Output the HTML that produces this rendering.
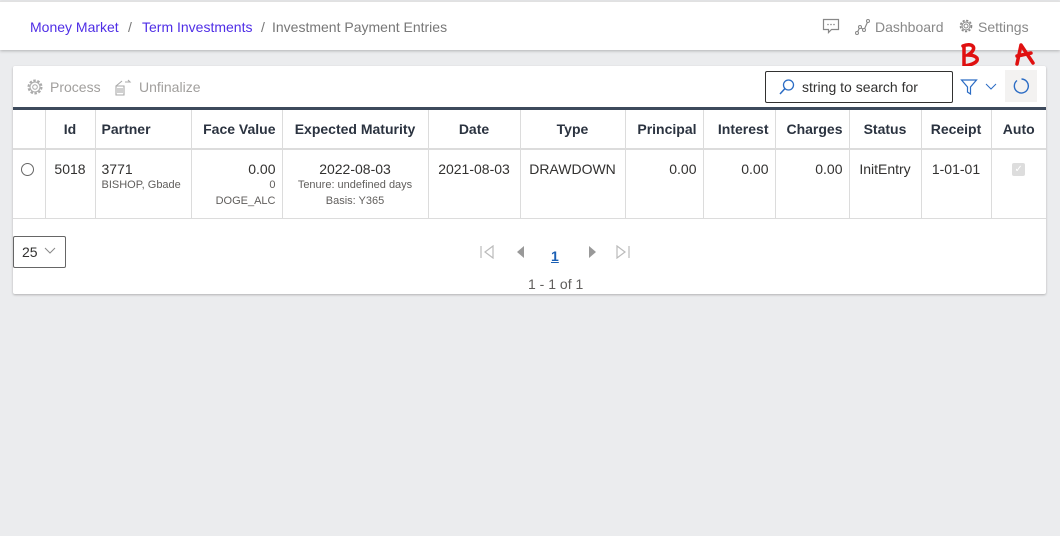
<!DOCTYPE html>
<html><head><style>
*{box-sizing:border-box;margin:0;padding:0}
body{width:1060px;height:536px;background:#ebecee;font-family:"Liberation Sans",sans-serif;font-size:14px;color:#323130;position:relative;overflow:hidden}
.top{position:absolute;left:0;top:1px;width:1060px;height:49px;background:#fff;border-top:1px solid #e1e1e1;box-shadow:0 1px 3px rgba(0,0,0,.25)}
.a{position:absolute;white-space:nowrap}
.card{position:absolute;left:13px;top:66px;width:1033px;height:228px;background:#fff;box-shadow:0 1px 2px rgba(0,0,0,.25);border-radius:2px}
table{position:absolute;left:0;top:41px;width:1033px;border-collapse:collapse;border-top:3px solid #3d4a5c}
td,th{border:1px solid #dcdcdc;padding:0 6px;vertical-align:top}
th{height:40px;font-weight:bold;color:#2b3340;vertical-align:middle;font-size:14px;border-bottom:2px solid #dcdcdc}
td{height:70px;padding-top:11px}
tr td:first-child,tr th:first-child{border-left:none}
tr td:last-child,tr th:last-child{border-right:none}
.r{text-align:right}.c{text-align:center}
.s{font-size:11px;color:#605e5c;line-height:16px}
</style></head><body>
<div class="top">
<span class="a" style="left:30px;top:17px;color:#4f2ee6">Money Market</span>
<span class="a" style="left:128px;top:17px;color:#777">/</span>
<span class="a" style="left:142px;top:17px;color:#4f2ee6">Term Investments</span>
<span class="a" style="left:261px;top:17px;color:#777">/</span>
<span class="a" style="left:272px;top:17px;color:#777">Investment Payment Entries</span>
<svg class="a" style="left:822px;top:16px" width="18" height="16" viewBox="0 0 18 16"><path d="M1.5 1.5h15v10h-7l-3 3v-3h-5z" fill="none" stroke="#888" stroke-width="1.2"/><circle cx="6" cy="6.5" r=".8" fill="#888"/><circle cx="9" cy="6.5" r=".8" fill="#888"/><circle cx="12" cy="6.5" r=".8" fill="#888"/></svg>
<svg class="a" style="left:855px;top:17px" width="16" height="16" viewBox="0 0 16 16"><path d="M2 14l3-6 4 3 4-9" fill="none" stroke="#888" stroke-width="1.2"/><circle cx="2" cy="14" r="1.5" fill="#fff" stroke="#888"/><circle cx="5" cy="8" r="1.5" fill="#fff" stroke="#888"/><circle cx="9" cy="11" r="1.5" fill="#fff" stroke="#888"/><circle cx="13" cy="2" r="1.5" fill="#fff" stroke="#888"/></svg>
<span class="a" style="left:875px;top:17px;color:#888">Dashboard</span>
<svg class="a" style="left:958px;top:16px" width="16" height="16" viewBox="0 0 16 16"><circle cx="8" cy="8" r="5.5" fill="none" stroke="#888" stroke-width="1.6" stroke-dasharray="2.2 1.5"/><circle cx="8" cy="8" r="4" fill="none" stroke="#888"/><circle cx="8" cy="8" r="2" fill="none" stroke="#888"/></svg>
<span class="a" style="left:978px;top:17px;color:#888">Settings</span>
</div>
<svg class="a" style="left:958px;top:40px" width="82" height="30" viewBox="0 0 82 30"><path d="M6 6v21M5 6c9-4 16 2 5 9c11 0 15 8 -4 11" fill="none" stroke="#e01010" stroke-width="3.5" stroke-linecap="round"/><path d="M59 24l4-19l12 18M59 16c5-1 10-2 14-3" fill="none" stroke="#e01010" stroke-width="3.5" stroke-linecap="round" stroke-linejoin="round"/></svg>
<div class="card">
<svg class="a" style="left:13px;top:12px" width="18" height="18" viewBox="0 0 18 18"><circle cx="9" cy="9" r="6.5" fill="none" stroke="#aaa" stroke-width="2" stroke-dasharray="2.5 1.6"/><circle cx="9" cy="9" r="5" fill="none" stroke="#aaa"/><circle cx="9" cy="9" r="2.3" fill="none" stroke="#aaa"/></svg>
<span class="a" style="left:37px;top:13px;color:#a19f9d">Process</span>
<svg class="a" style="left:100px;top:12px" width="20" height="18" viewBox="0 0 20 18"><path d="M3 8h8v9H3zM5 10v5M7 10v5M9 10v5M3 8l6-5M12 4h5l-2-2" fill="none" stroke="#aaa" stroke-width="1.1"/></svg>
<span class="a" style="left:126px;top:13px;color:#a19f9d">Unfinalize</span>
<div class="a" style="left:752px;top:5px;width:188px;height:32px;border:1px solid #323130;border-radius:2px"></div>
<svg class="a" style="left:765px;top:12px" width="18" height="18" viewBox="0 0 18 18"><circle cx="10.5" cy="7" r="5" fill="none" stroke="#2b6cc4" stroke-width="1.3"/><path d="M7 10.5L2 16" stroke="#2b6cc4" stroke-width="1.5"/></svg>
<span class="a" style="left:789px;top:13px;color:#323130">string to search for</span>
<svg class="a" style="left:947px;top:12px" width="18" height="18" viewBox="0 0 18 18"><path d="M1.5 2h15l-6 7v7l-3-2V9z" fill="none" stroke="#2b6cc4" stroke-width="1.2"/></svg>
<svg class="a" style="left:972px;top:15px" width="12" height="10" viewBox="0 0 12 10"><path d="M1 3l5 5 5-5" fill="none" stroke="#2b6cc4"/></svg>
<div class="a" style="left:992px;top:4px;width:32px;height:32px;background:#f3f2f1"></div>
<svg class="a" style="left:998px;top:10px" width="20" height="20" viewBox="0 0 20 20"><path d="M6 4.5A7 7 0 1 0 10.5 3" fill="none" stroke="#2b6cc4" stroke-width="1.4"/></svg>
<table>
<tr><th style="width:32px"></th><th style="width:50px" class="c">Id</th><th style="width:96px;text-align:left">Partner</th><th style="width:91px" class="r">Face Value</th><th style="width:146px" class="c">Expected Maturity</th><th style="width:92px" class="c">Date</th><th style="width:105px" class="c">Type</th><th style="width:78px" class="r">Principal</th><th style="width:72px" class="r">Interest</th><th style="width:74px" class="r">Charges</th><th style="width:72px" class="c">Status</th><th style="width:70px" class="c">Receipt</th><th class="c">Auto</th></tr>
<tr><td><div style="width:13px;height:13px;border:1px solid #666;border-radius:50%;margin:2px 0 0 2px"></div></td><td class="c">5018</td><td>3771<div class="s">BISHOP, Gbade</div></td><td class="r">0.00<div class="s">0</div><div class="s">DOGE_ALC</div></td><td class="c">2022-08-03<div class="s">Tenure: undefined days</div><div class="s">Basis: Y365</div></td><td class="c">2021-08-03</td><td class="c">DRAWDOWN</td><td class="r">0.00</td><td class="r">0.00</td><td class="r">0.00</td><td class="c">InitEntry</td><td class="c">1-01-01</td><td class="c"><div style="width:13px;height:13px;background:#ddd;border-radius:2px;margin:2px auto 0;color:#fff;font-size:10px;line-height:13px">✓</div></td></tr>
</table>
<div class="a" style="left:0;top:170px;width:53px;height:32px;border:1px solid #666;border-radius:2px"></div>
<span class="a" style="left:9px;top:178px">25</span>
<svg class="a" style="left:31px;top:181px" width="12" height="8" viewBox="0 0 12 8"><path d="M1 1l5 5 5-5" fill="none" stroke="#888"/></svg>
<svg class="a" style="left:467px;top:179px" width="150" height="14" viewBox="0 0 150 14"><path d="M1 1v12M13 1L5 7l8 6z" fill="none" stroke="#bbb" stroke-width="1.2"/><path d="M44 1l-7 6 7 6z" fill="#999"/><path d="M109 1l7 6-7 6z" fill="#999"/><path d="M137 1l8 6-8 6zM149 1v12" fill="none" stroke="#bbb" stroke-width="1.2"/></svg>
<span class="a" style="left:538px;top:182px;color:#1a5fb4;font-weight:bold;text-decoration:underline;font-size:14px">1</span>
<span class="a" style="left:515px;top:210px;color:#605e5c">1 - 1 of 1</span>
</div>
</body></html>
